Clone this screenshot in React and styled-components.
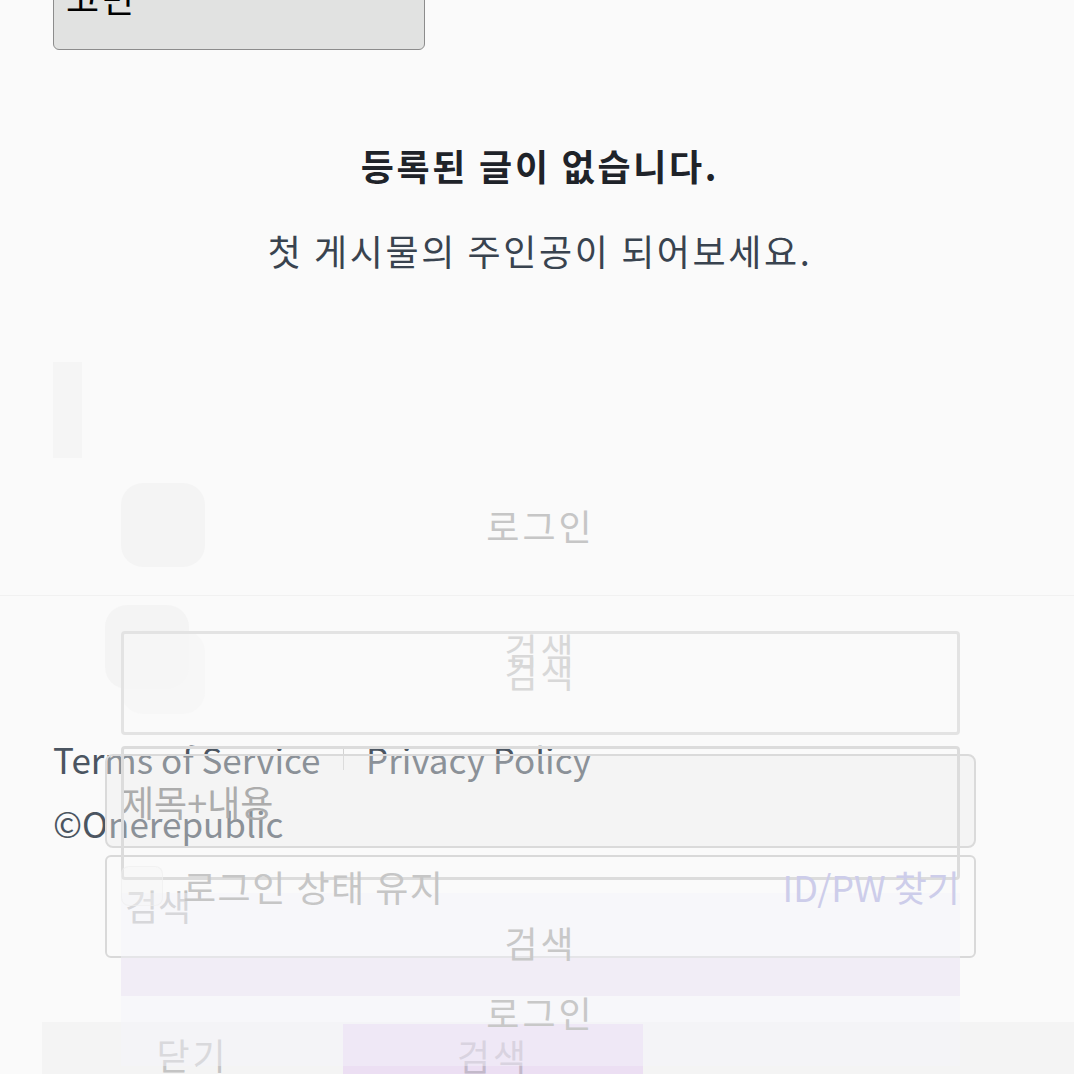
import React from "react";
import styled, { createGlobalStyle } from "styled-components";

const GlobalStyle = createGlobalStyle`
  html, body {
    margin: 0;
    padding: 0;
    background: #fafafa;
    overflow: hidden;
  }
  body {
    font-family: "Noto Sans CJK KR", "Noto Sans", sans-serif;
  }
`;

const Page = styled.div`
  position: relative;
  width: 1074px;
  height: 1074px;
  overflow: hidden;
  background: #fafafa;
`;

const Content = styled.main`
  display: flex;
  flex-direction: column;
  padding: 0 47px 0 53px;
`;

const CategoryButton = styled.div`
  box-sizing: border-box;
  margin-top: -30px;
  width: 372px;
  height: 80px;
  padding: 0 12px;
  background: #e1e2e1;
  border: 1.5px solid #8c8c8c;
  border-radius: 6px;
  font-size: 36px;
  line-height: 52px;
  letter-spacing: 2px;
  color: #000;
`;

const EmptyTitle = styled.h2`
  margin: 89px 0 0;
  text-align: center;
  font-size: 36px;
  line-height: 52px;
  font-weight: 700;
  letter-spacing: 2.7px;
  color: #1f2329;
`;

const EmptySub = styled.p`
  margin: 33px 0 0;
  text-align: center;
  font-size: 36px;
  line-height: 52px;
  letter-spacing: 2.6px;
  color: #39434f;
`;

const SideGhost = styled.div`
  margin-top: 86px;
  width: 29px;
  height: 96px;
  background: #f5f5f5;
`;

const Footer = styled.footer`
  margin-top: 275px;
  display: flex;
  flex-direction: column;
  gap: 12px;
  color: #4b5561;
  font-size: 35px;
  line-height: 52px;
`;

const FooterLinks = styled.div`
  display: flex;
  align-items: center;
  gap: 22px;
`;

const Divider = styled.span`
  width: 1.5px;
  height: 22px;
  background: #d2d2d2;
`;

/* ghost layers of closing modals */
const Backdrop = styled.div`
  position: absolute;
  left: 0;
  right: 0;
  top: 595px;
  bottom: 0;
  border-top: 1px solid #f1f1f1;
`;

const Layer = styled.div`
  position: absolute;
  left: ${(p) => p.$left}px;
  top: ${(p) => p.$top}px;
  width: ${(p) => p.$width}px;
  display: flex;
  flex-direction: column;
`;

const Header = styled.div`
  display: grid;
  grid-template-columns: 84px 1fr 84px;
  align-items: center;
  height: 84px;
`;

const BackSquare = styled.div`
  width: 84px;
  height: 84px;
  border-radius: 22px;
  background: ${(p) => p.$bg || "#f4f4f4"};
`;

const GhostTitle = styled.div`
  text-align: center;
  font-size: 36px;
  line-height: 52px;
  letter-spacing: 3px;
  color: ${(p) => p.$color || "#c6c6c6"};
  transform: translateY(${(p) => p.$shift || 0}px);
`;

const InputBox = styled.div`
  box-sizing: border-box;
  margin-top: ${(p) => p.$mt}px;
  height: ${(p) => p.$h}px;
  border: ${(p) => p.$bw || 3}px solid ${(p) => p.$border || "#e3e3e3"};
  border-radius: ${(p) => p.$radius || 4}px;
  background: ${(p) => p.$bg || "#fbfbfb"};
  display: flex;
  align-items: ${(p) => p.$align || "center"};
  padding: 0 14px;
  font-size: 36px;
  line-height: 52px;
  color: ${(p) => p.$color || "#b4b4b4"};
`;

const KeepRow = styled.div`
  position: relative;
  z-index: 1;
  margin-top: -14px;
  height: 40px;
  display: flex;
  align-items: center;
  gap: 20px;
  font-size: 36px;
  letter-spacing: 1.5px;
  color: #c6c6c6;
`;

const CheckGhost = styled.span`
  width: 40px;
  height: 38px;
  border-radius: 8px;
  border: 1px solid rgba(236, 236, 236, 0.6);
  background: rgba(244, 244, 244, 0.35);
`;

const FindLink = styled.span`
  margin-left: auto;
  letter-spacing: 0;
  color: #cdcdea;
`;

const LoginPanel = styled.div`
  margin-top: -13px;
  height: 173px;
  background: rgba(245, 243, 250, 0.45);
  display: flex;
  flex-direction: column;
`;

const PanelText = styled.div`
  position: relative;
  text-align: center;
  font-size: 36px;
  line-height: 52px;
  letter-spacing: 3px;
  color: #c8c8c8;
`;

const PanelBand = styled.div`
  height: 38px;
  background: rgba(238, 232, 244, 0.7);
`;

const BottomBar = styled.div`
  position: absolute;
  left: 42px;
  right: 0;
  top: 1022px;
  height: 64px;
  background: #f4f4f4;
  display: grid;
  grid-template-columns: 301px 300px 1fr;
  font-size: 36px;
  line-height: 52px;
  letter-spacing: 3px;
`;

const BarButton = styled.div`
  margin-top: ${(p) => (p.$primary ? 2 : 0)}px;
  display: flex;
  align-items: center;
  justify-content: center;
  background: ${(p) => (p.$primary ? "#ecdff3" : "transparent")};
  color: ${(p) => (p.$primary ? "#c3b9ca" : "#c4c4c4")};
`;

export default function App() {
  return (
    <Page>
      <GlobalStyle />
      <Content>
        <CategoryButton>고민</CategoryButton>
        <EmptyTitle>등록된 글이 없습니다.</EmptyTitle>
        <EmptySub>첫 게시물의 주인공이 되어보세요.</EmptySub>
        <SideGhost />
        <Footer>
          <FooterLinks>
            <span>Terms of Service</span>
            <Divider />
            <span>Privacy Policy</span>
          </FooterLinks>
          <span>©Onerepublic</span>
        </Footer>
      </Content>

      <Backdrop />

      <BottomBar>
        <BarButton>닫기</BarButton>
        <BarButton $primary>검색</BarButton>
        <span />
      </BottomBar>

      {/* search sheet, second frame */}
      <Layer $left={121} $top={630} $width={839}>
        <Header>
          <BackSquare $bg="rgba(243,243,243,0.7)" />
          <GhostTitle $color="#c2c2c2">검색</GhostTitle>
          <span />
        </Header>
      </Layer>

      {/* search sheet, first frame */}
      <Layer $left={105} $top={605} $width={871}>
        <Header>
          <BackSquare $bg="rgba(243,243,243,0.8)" />
          <GhostTitle $color="#c2c2c2" $shift={2}>
            검색
          </GhostTitle>
          <span />
        </Header>
        <InputBox
          $mt={65}
          $h={94}
          $bw={2}
          $radius={8}
          $border="#dadada"
          $bg="rgba(236,236,236,0.4)"
          $color="#acacac"
        >
          제목+내용
        </InputBox>
        <InputBox
          $mt={7}
          $h={103}
          $bw={2}
          $radius={6}
          $border="#d9d9d9"
          $bg="transparent"
          $color="#c0c0c0"
          $align="flex-start"
          style={{ paddingLeft: 18, paddingTop: 22 }}
        >
          검색
        </InputBox>
      </Layer>

      {/* login sheet fading out */}
      <Layer $left={121} $top={483} $width={839}>
        <Header>
          <BackSquare />
          <GhostTitle>로그인</GhostTitle>
          <span />
        </Header>
        <InputBox $mt={64} $h={104} $bg="rgba(251,251,251,0.4)" />
        <InputBox $mt={11} $h={134} $border="#dcdcdc" $bg="transparent" />
        <KeepRow>
          <CheckGhost />
          <span>로그인 상태 유지</span>
          <FindLink>ID/PW 찾기</FindLink>
        </KeepRow>
        <LoginPanel>
          <PanelText style={{ marginTop: 23 }}>검색</PanelText>
          <PanelBand style={{ marginTop: -10 }} />
          <PanelText style={{ marginTop: -10 }}>로그인</PanelText>
        </LoginPanel>
      </Layer>
    </Page>
  );
}
